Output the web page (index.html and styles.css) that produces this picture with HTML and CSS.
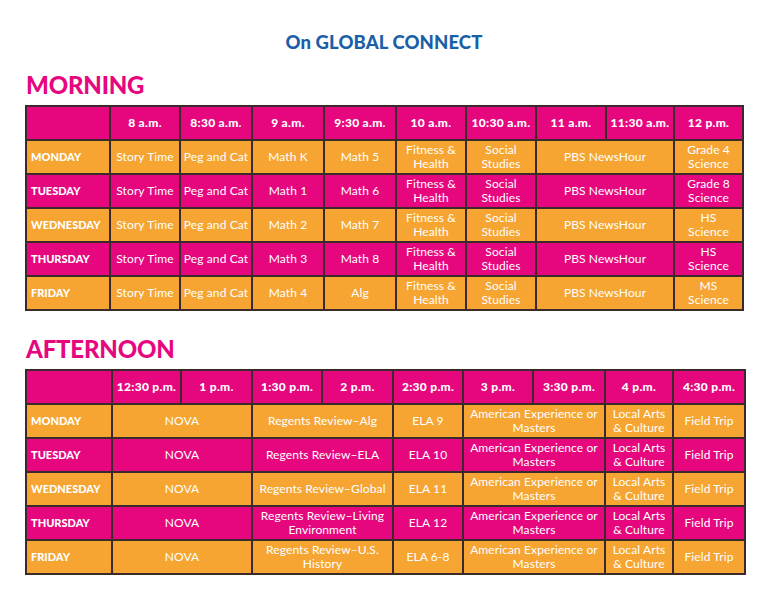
FILE: index.html
```html
<!DOCTYPE html>
<html lang="en">
<head>
<meta charset="utf-8">
<title>On GLOBAL CONNECT</title>
<link rel="stylesheet" href="styles.css">
</head>
<body>
<div class="page">
  <h1 class="title">On GLOBAL CONNECT</h1>

  <h2 class="section">MORNING</h2>
  <table class="sched morning">
    <colgroup>
      <col class="m-day"><col class="m-c1"><col class="m-c2"><col class="m-c3"><col class="m-c4"><col class="m-c5"><col class="m-c6"><col class="m-c7"><col class="m-c8"><col class="m-c9">
    </colgroup>
    <tr class="pink head">
      <th></th><th>8 a.m.</th><th>8:30 a.m.</th><th>9 a.m.</th><th>9:30 a.m.</th><th>10 a.m.</th><th>10:30 a.m.</th><th>11 a.m.</th><th>11:30 a.m.</th><th>12 p.m.</th>
    </tr>
    <tr class="orange">
      <th class="day">MONDAY</th><td>Story Time</td><td>Peg and Cat</td><td>Math K</td><td>Math 5</td><td>Fitness &amp;<br>Health</td><td>Social<br>Studies</td><td colspan="2">PBS NewsHour</td><td>Grade 4<br>Science</td>
    </tr>
    <tr class="pink">
      <th class="day">TUESDAY</th><td>Story Time</td><td>Peg and Cat</td><td>Math 1</td><td>Math 6</td><td>Fitness &amp;<br>Health</td><td>Social<br>Studies</td><td colspan="2">PBS NewsHour</td><td>Grade 8<br>Science</td>
    </tr>
    <tr class="orange">
      <th class="day">WEDNESDAY</th><td>Story Time</td><td>Peg and Cat</td><td>Math 2</td><td>Math 7</td><td>Fitness &amp;<br>Health</td><td>Social<br>Studies</td><td colspan="2">PBS NewsHour</td><td>HS<br>Science</td>
    </tr>
    <tr class="pink">
      <th class="day">THURSDAY</th><td>Story Time</td><td>Peg and Cat</td><td>Math 3</td><td>Math 8</td><td>Fitness &amp;<br>Health</td><td>Social<br>Studies</td><td colspan="2">PBS NewsHour</td><td>HS<br>Science</td>
    </tr>
    <tr class="orange">
      <th class="day">FRIDAY</th><td>Story Time</td><td>Peg and Cat</td><td>Math 4</td><td>Alg</td><td>Fitness &amp;<br>Health</td><td>Social<br>Studies</td><td colspan="2">PBS NewsHour</td><td>MS<br>Science</td>
    </tr>
  </table>

  <h2 class="section section-pm">AFTERNOON</h2>
  <table class="sched afternoon">
    <colgroup>
      <col class="a-day"><col class="a-c1"><col class="a-c2"><col class="a-c3"><col class="a-c4"><col class="a-c5"><col class="a-c6"><col class="a-c7"><col class="a-c8"><col class="a-c9">
    </colgroup>
    <tr class="pink head">
      <th></th><th>12:30 p.m.</th><th>1 p.m.</th><th>1:30 p.m.</th><th>2 p.m.</th><th>2:30 p.m.</th><th>3 p.m.</th><th>3:30 p.m.</th><th>4 p.m.</th><th>4:30 p.m.</th>
    </tr>
    <tr class="orange">
      <th class="day">MONDAY</th><td colspan="2">NOVA</td><td colspan="2">Regents Review–Alg</td><td>ELA 9</td><td colspan="2">American Experience or<br>Masters</td><td>Local Arts<br>&amp; Culture</td><td>Field Trip</td>
    </tr>
    <tr class="pink">
      <th class="day">TUESDAY</th><td colspan="2">NOVA</td><td colspan="2">Regents Review–ELA</td><td>ELA 10</td><td colspan="2">American Experience or<br>Masters</td><td>Local Arts<br>&amp; Culture</td><td>Field Trip</td>
    </tr>
    <tr class="orange">
      <th class="day">WEDNESDAY</th><td colspan="2">NOVA</td><td colspan="2">Regents Review–Global</td><td>ELA 11</td><td colspan="2">American Experience or<br>Masters</td><td>Local Arts<br>&amp; Culture</td><td>Field Trip</td>
    </tr>
    <tr class="pink">
      <th class="day">THURSDAY</th><td colspan="2">NOVA</td><td colspan="2">Regents Review–Living<br>Environment</td><td>ELA 12</td><td colspan="2">American Experience or<br>Masters</td><td>Local Arts<br>&amp; Culture</td><td>Field Trip</td>
    </tr>
    <tr class="orange">
      <th class="day">FRIDAY</th><td colspan="2">NOVA</td><td colspan="2">Regents Review–U.S.<br>History</td><td>ELA 6-8</td><td colspan="2">American Experience or<br>Masters</td><td>Local Arts<br>&amp; Culture</td><td>Field Trip</td>
    </tr>
  </table>
</div>
</body>
</html>
```

FILE: styles.css
```css
html, body {
  margin: 0;
  padding: 0;
  background: #ffffff;
}

body {
  font-family: Lato, "Open Sans", "Liberation Sans", sans-serif;
  color: #ffffff;
}

.page {
  width: 768px;
  height: 593px;
  overflow: hidden;
  padding-top: 32px;
  box-sizing: border-box;
}

.title {
  margin: 0;
  text-align: center;
  font-size: 18.5px;
  line-height: 20px;
  font-weight: 900;
  color: #1b5fa8;
  letter-spacing: 0.1px;
}

.section {
  margin: 18px 0 0 26px;
  font-size: 24px;
  line-height: 30px;
  font-weight: 900;
  color: #e6077f;
  letter-spacing: -0.2px;
}

.section-pm {
  margin-top: 23px;
}

.sched {
  margin: 5px 0 0 25px;
  border-collapse: collapse;
  table-layout: fixed;
  font-size: 12px;
  line-height: 14px;
}

.morning { width: 717px; }
.afternoon { width: 719px; }

.m-day { width: 84px; }
.m-c1 { width: 70px; }
.m-c2 { width: 72px; }
.m-c3 { width: 72px; }
.m-c4 { width: 72px; }
.m-c5 { width: 70px; }
.m-c6 { width: 70px; }
.m-c7 { width: 70px; }
.m-c8 { width: 68px; }
.m-c9 { width: 69px; }

.a-day { width: 86px; }
.a-c1 { width: 69px; }
.a-c2 { width: 71px; }
.a-c3 { width: 70px; }
.a-c4 { width: 71px; }
.a-c5 { width: 70px; }
.a-c6 { width: 70px; }
.a-c7 { width: 72px; }
.a-c8 { width: 68px; }
.a-c9 { width: 72px; }

.sched tr {
  height: 34px;
}

.sched th,
.sched td {
  border: 2px solid #3a2a2c;
  padding: 0 1px;
  text-align: center;
  vertical-align: middle;
  white-space: nowrap;
  overflow: hidden;
}

.sched td {
  font-weight: 400;
  letter-spacing: 0.1px;
}

.sched .head th {
  font-weight: 900;
  letter-spacing: 0.3px;
}

.sched th.day {
  text-align: left;
  padding-left: 4px;
  font-weight: 900;
  font-size: 11px;
  letter-spacing: 0;
}

.pink { background: #e6077f; }
.orange { background: #f6a533; }
```
